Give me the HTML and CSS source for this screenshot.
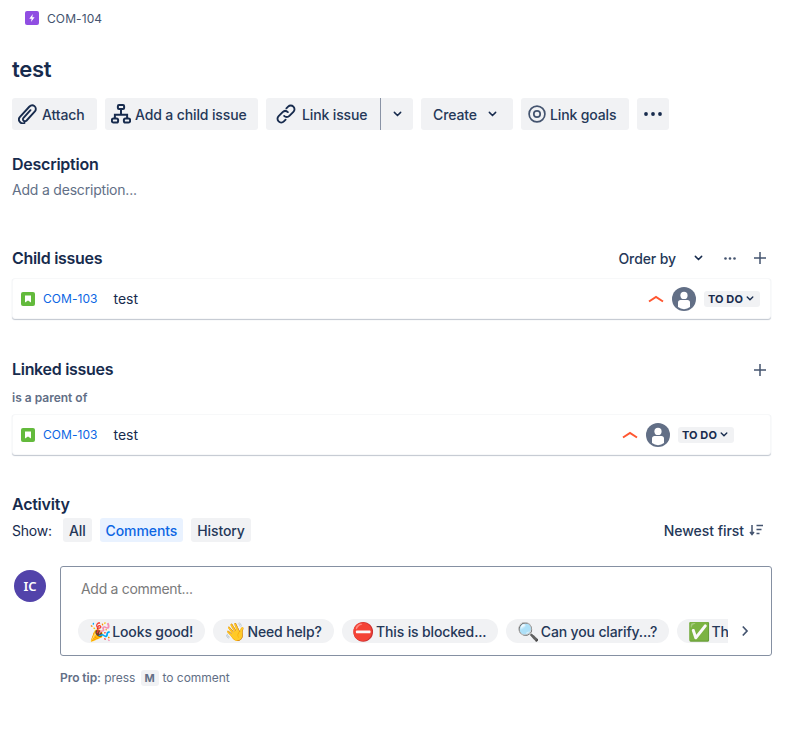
FILE: index.html
```html
<!DOCTYPE html>
<html lang="en">
<head>
<meta charset="utf-8">
<title>COM-104 test</title>
<link rel="stylesheet" href="styles.css">
</head>
<body>
<main class="page">
  <div class="crumb">
    <svg class="crumb-icon" viewBox="0 0 14 14"><rect width="14" height="14" rx="2" fill="#904ee2"/><path d="M7.8 3 4.3 7.7h2.3L6 11l3.6-4.8H7.3z" fill="#fff"/></svg>
    <span>COM-104</span>
  </div>
  <h1 class="title">test</h1>
  <div class="toolbar">
    <button class="btn w-attach"><svg class="ic" viewBox="2 2 16 16" fill="none" stroke="#172b4d" stroke-width="1.500" stroke-linecap="round"><path d="M7.2 17.2c-1.3.6-2.8.2-3.7-.9-1-1.2-.9-2.900.1-4L11 4.200c1.200-1.300 3-1.500 4.200-.5 1.300 1.100 1.400 3 .3 4.300l-6.600 7.200c-.7.7-1.700.8-2.400.2-.7-.6-.7-1.700-.1-2.400l5.600-6.100"/></svg>Attach</button>
    <button class="btn w-child"><svg class="ic" viewBox="1 1 18 18" fill="none" stroke="#172b4d" stroke-width="1.800"><rect x="7.200" y="2" width="5.600" height="3.600" rx="1"/><path d="M10 5.600v5M4.500 14v-3.400h11V14"/><rect x="1.800" y="14" width="5.600" height="3.600" rx="1.400"/><rect x="12.600" y="14" width="5.600" height="3.600" rx="1.400"/></svg>Add a child issue</button>
    <div class="split">
      <button class="btn split-main"><svg class="ic" viewBox="2 2 16 16" fill="none" stroke="#172b4d" stroke-width="1.500" stroke-linecap="round"><path d="M8.500 11.500c1.200 1.200 3 1.200 4.200 0l3.200-3.200c1.200-1.200 1.200-3 0-4.200s-3-1.200-4.200 0l-1.400 1.400"/><path d="M11.500 8.500c-1.200-1.200-3-1.200-4.200 0l-3.200 3.200c-1.200 1.200-1.200 3 0 4.200s3 1.200 4.200 0l1.400-1.400"/></svg>Link issue</button>
      <button class="btn split-arrow"><svg class="chev" viewBox="0 0 10 6"><path d="M1.500 1.200 5 4.600l3.500-3.400" /></svg></button>
    </div>
    <button class="btn w-create">Create<svg class="chev create-chev" viewBox="0 0 10 6"><path d="M1.500 1.200 5 4.600l3.500-3.400" /></svg></button>
    <button class="btn w-goals"><svg class="ic goals-ic" viewBox="0 0 20 20" fill="none" stroke="#44546f" stroke-width="1.700"><circle cx="10" cy="10" r="7.900"/><circle cx="10" cy="10" r="3.200"/></svg>Link goals</button>
    <button class="btn w-more" aria-label="More"><svg class="dots" viewBox="0 0 18 4"><circle cx="2" cy="2" r="1.900"/><circle cx="9" cy="2" r="1.900"/><circle cx="16" cy="2" r="1.900"/></svg></button>
  </div>

  <h2 class="h-desc">Description</h2>
  <p class="desc-hint">Add a description...</p>

  <div class="section-head head-child">
    <h2>Child issues</h2>
    <div class="head-tools">
      <span class="order">Order by</span>
      <svg class="chev order-chev" viewBox="0 0 10 6"><path d="M1.500 1.200 5 4.600l3.500-3.400" /></svg>
      <svg class="dots-sm" viewBox="0 0 12 3"><circle cx="1.500" cy="1.500" r="1.300"/><circle cx="6" cy="1.500" r="1.300"/><circle cx="10.500" cy="1.500" r="1.300"/></svg>
      <svg class="plus" viewBox="0 0 12 12"><path d="M6 0v12M0 6h12"/></svg>
    </div>
  </div>
  <div class="issue">
    <svg class="story" viewBox="0 0 14 14"><rect width="14" height="14" rx="2" fill="#63ba3c"/><path d="M4 3.500h6v7L7 8.400 4 10.500z" fill="#fff"/></svg>
    <a class="key">COM-103</a>
    <span class="summary">test</span>
    <svg class="prio" viewBox="0 0 16 8"><path d="M1 6.500 8 2l7 4.500" /></svg>
    <svg class="person" viewBox="0 0 24 24"><circle cx="12" cy="12" r="12" fill="#626f86"/><circle cx="12" cy="8.400" r="3.600" fill="#fff"/><path d="M6 15.500c0-1.600 1-2.500 2.500-2.500h7c1.500 0 2.500.9 2.500 2.500V20a9.500 9.500 0 0 1-12 0z" fill="#fff"/></svg>
    <span class="lozenge">TO DO<svg class="chev loz-chev" viewBox="0 0 10 6"><path d="M1.500 1.200 5 4.600l3.500-3.400" /></svg></span>
  </div>

  <div class="section-head head-linked">
    <h2>Linked issues</h2>
    <svg class="plus" viewBox="0 0 12 12"><path d="M6 0v12M0 6h12"/></svg>
  </div>
  <p class="rel">is a parent of</p>
  <div class="issue issue-linked">
    <svg class="story" viewBox="0 0 14 14"><rect width="14" height="14" rx="2" fill="#63ba3c"/><path d="M4 3.500h6v7L7 8.400 4 10.500z" fill="#fff"/></svg>
    <a class="key">COM-103</a>
    <span class="summary">test</span>
    <svg class="prio" viewBox="0 0 16 8"><path d="M1 6.500 8 2l7 4.500" /></svg>
    <svg class="person" viewBox="0 0 24 24"><circle cx="12" cy="12" r="12" fill="#626f86"/><circle cx="12" cy="8.400" r="3.600" fill="#fff"/><path d="M6 15.500c0-1.600 1-2.500 2.500-2.500h7c1.500 0 2.500.9 2.500 2.500V20a9.500 9.500 0 0 1-12 0z" fill="#fff"/></svg>
    <span class="lozenge">TO DO<svg class="chev loz-chev" viewBox="0 0 10 6"><path d="M1.500 1.200 5 4.600l3.500-3.400" /></svg></span>
  </div>

  <h2 class="h-activity">Activity</h2>
  <div class="show-row">
    <span class="show-label">Show:</span>
    <button class="tab">All</button>
    <button class="tab tab-on">Comments</button>
    <button class="tab">History</button>
    <span class="newest">Newest first<svg class="sort" viewBox="0 0 14 12" fill="none" stroke="#44546f" stroke-width="1.500"><path d="M3 1v9M1 8l2 2.500L5 8"/><path d="M7.500 1.500H14M7.500 5.500H12.500M7.500 9.500H10.500"/></svg></span>
  </div>

  <div class="comment-row">
    <div class="avatar">IC</div>
    <div class="comment-col">
      <div class="comment-box">
        <div class="placeholder">Add a comment...</div>
        <div class="pills-row">
          <div class="pills">
            <span class="pill"><span class="emoji">🎉</span>Looks good!</span>
            <span class="pill"><span class="emoji">👋</span>Need help?</span>
            <span class="pill"><span class="emoji">⛔</span>This is blocked...</span>
            <span class="pill"><span class="emoji">🔍</span>Can you clarify...?</span>
            <span class="pill"><span class="emoji">✅</span>This is on track</span>
          </div>
          <svg class="next" viewBox="0 0 8 12"><path d="M1.800 1.500 6 6l-4.200 4.500"/></svg>
        </div>
      </div>
      <p class="tip"><b>Pro tip:</b> press <kbd>M</kbd>to comment</p>
    </div>
  </div>
</main>
</body>
</html>
```
FILE: styles.css
```css
* { box-sizing: border-box; }
html, body { margin: 0; padding: 0; background: #fff; }
body { font-family: Inter, "Noto Sans", sans-serif; font-size: 14px; letter-spacing: -0.2px; color: #172b4d; }
.page { width: 800px; height: 752px; padding: 0 29px 0 12px; overflow: hidden; }
h1, h2, p { margin: 0; }
button { font: inherit; letter-spacing: inherit; color: inherit; border: 0; padding: 0; }

.crumb { display: flex; align-items: center; gap: 8px; height: 14px; margin: 11px 0 0 13px; font-size: 12px; letter-spacing: 0.1px; color: #44546f; }
.crumb-icon { width: 14px; height: 14px; }
.title { margin-top: 28px; font-size: 22px; line-height: 32px; font-weight: 600; height: 32px; letter-spacing: -0.3px; }

.toolbar { display: flex; gap: 8px; margin-top: 13px; height: 32px; }
.btn { display: flex; align-items: center; justify-content: center; height: 32px; background: #f1f2f4; border-radius: 3px; font-weight: 500; letter-spacing: -0.13px; color: #253858; }
.ic { width: 20px; height: 20px; margin-right: 4px; flex: none; }
.w-attach { width: 85px; padding-left: 6px; justify-content: flex-start; }
.w-child { width: 153px; padding-left: 6px; justify-content: flex-start; }
.split { display: flex; }
.split-main { width: 114px; padding-left: 10px; justify-content: flex-start; border-radius: 3px 0 0 3px; }
.split-main .ic { margin-right: 6px; }
.split-arrow { width: 33px; border-left: 1px solid #8993a5; border-radius: 0 3px 3px 0; }
.chev { width: 9px; height: 6px; fill: none; stroke: #172b4d; stroke-width: 1.700; stroke-linecap: round; }
.w-create { width: 92px; padding-left: 12px; justify-content: flex-start; }
.create-chev { margin-left: 11px; }
.w-goals { width: 108px; padding-left: 6px; justify-content: flex-start; }
.goals-ic { margin-right: 3px; }
.w-more { width: 32px; }
.dots { width: 18px; height: 4px; fill: #172b4d; }

.h-desc { margin-top: 24px; font-size: 16px; line-height: 20px; font-weight: 600; letter-spacing: -0.25px; }
.desc-hint { margin-top: 6px; line-height: 20px; color: #626f86; }

.section-head { display: flex; align-items: center; justify-content: space-between; height: 20px; }
.section-head h2 { font-size: 16px; line-height: 20px; font-weight: 600; letter-spacing: -0.3px; }
.head-child { margin-top: 48px; }
.head-tools { display: flex; align-items: center; }
.order { font-weight: 500; letter-spacing: -0.1px; color: #253858; }
.order-chev { margin-left: 18px; }
.dots-sm { width: 12px; height: 3px; margin-left: 21px; fill: #44546f; }
.plus { width: 12px; height: 12px; fill: none; stroke: #44546f; stroke-width: 1.500; margin-right: 5px; }
.head-tools .plus { margin-left: 18px; }
.head-linked .plus { margin-top: 2px; }

.issue { display: flex; align-items: center; height: 41px; margin-top: 10px; padding: 0 10px 0 8px; background: #fff; border-radius: 3px; border: 1px solid #f7f8f9; box-shadow: 0 1px 1px #c1c7d0; }
.story { width: 14px; height: 14px; flex: none; }
.key { margin-left: 8px; font-size: 12px; letter-spacing: 0.05px; color: #0c66e4; }
.summary { margin-left: 16px; font-size: 14px; letter-spacing: 0; flex: 1; }
.prio { width: 16px; height: 8px; fill: none; stroke: #ff5630; stroke-width: 2; }
.person { width: 24px; height: 24px; margin-left: 8px; }
.lozenge { display: flex; align-items: center; height: 16px; width: 56px; margin-left: 8px; padding: 0 4px; background: #f1f2f4; border-radius: 3px; font-size: 11px; font-weight: 700; letter-spacing: .1px; color: #172b4d; }
.loz-chev { margin-left: 3px; width: 8px; height: 5px; }
.issue-linked { margin-top: 8px; padding-right: 36px; }

.head-linked { margin-top: 40px; }
.rel { margin-top: 11px; font-size: 12px; line-height: 16px; font-weight: 600; letter-spacing: 0; color: #626f86; }

.h-activity { margin-top: 39px; font-size: 16px; line-height: 20px; font-weight: 600; letter-spacing: -0.25px; }
.show-row { display: flex; align-items: center; gap: 8px; height: 24px; margin-top: 4px; }
.show-label { margin-right: 3px; }
.tab { height: 24px; padding: 0 6px; background: #f1f2f4; border-radius: 3px; font-weight: 500; letter-spacing: -0.1px; color: #253858; }
.tab-on { background: #e9f2ff; color: #0c66e4; }
.newest { display: flex; align-items: center; margin-left: auto; margin-right: 8px; font-weight: 500; letter-spacing: -0.05px; color: #253858; }
.sort { width: 14px; height: 12px; margin-left: 5px; }

.comment-row { display: flex; margin-top: 24px; padding-left: 2px; }
.avatar { display: flex; align-items: center; justify-content: center; width: 32px; height: 32px; margin-top: 4px; background: #5243aa; border-radius: 50%; color: #fff; font-family: "Noto Sans", sans-serif; font-size: 13px; font-weight: 600; flex: none; letter-spacing: 0; }
.comment-col { margin-left: 14px; width: 712px; flex: none; }
.comment-box { height: 90px; border: 1px solid #8590a2; border-radius: 3px; padding: 0 17px; }
.placeholder { margin: 13px 0 0 3px; line-height: 18px; letter-spacing: -0.3px; color: #7a7a7a; }
.pills-row { display: flex; align-items: center; margin-top: 21px; height: 24px; }
.pills { display: flex; gap: 8px; width: 650px; overflow: hidden; flex: none; }
.pill { display: flex; align-items: center; height: 24px; padding: 0 12px 0 11px; background: #f1f2f4; border-radius: 12px; white-space: nowrap; font-weight: 500; letter-spacing: -0.14px; flex: none; color: #253858; }
.emoji { font-family: "Noto Color Emoji", sans-serif; font-size: 18px; margin-right: 1px; }
.next { width: 8px; height: 12px; margin-left: 13px; fill: none; stroke: #44546f; stroke-width: 1.700; }
.tip { margin-top: 14px; font-size: 12px; line-height: 16px; letter-spacing: -0.05px; color: #626f86; }
.tip b { font-weight: 600; }
kbd { display: inline-block; min-width: 18px; height: 16px; margin: 0 4px 0 2px; background: #f1f2f4; border-radius: 3px; font-family: inherit; font-size: 11px; font-weight: 700; text-align: center; }
```
